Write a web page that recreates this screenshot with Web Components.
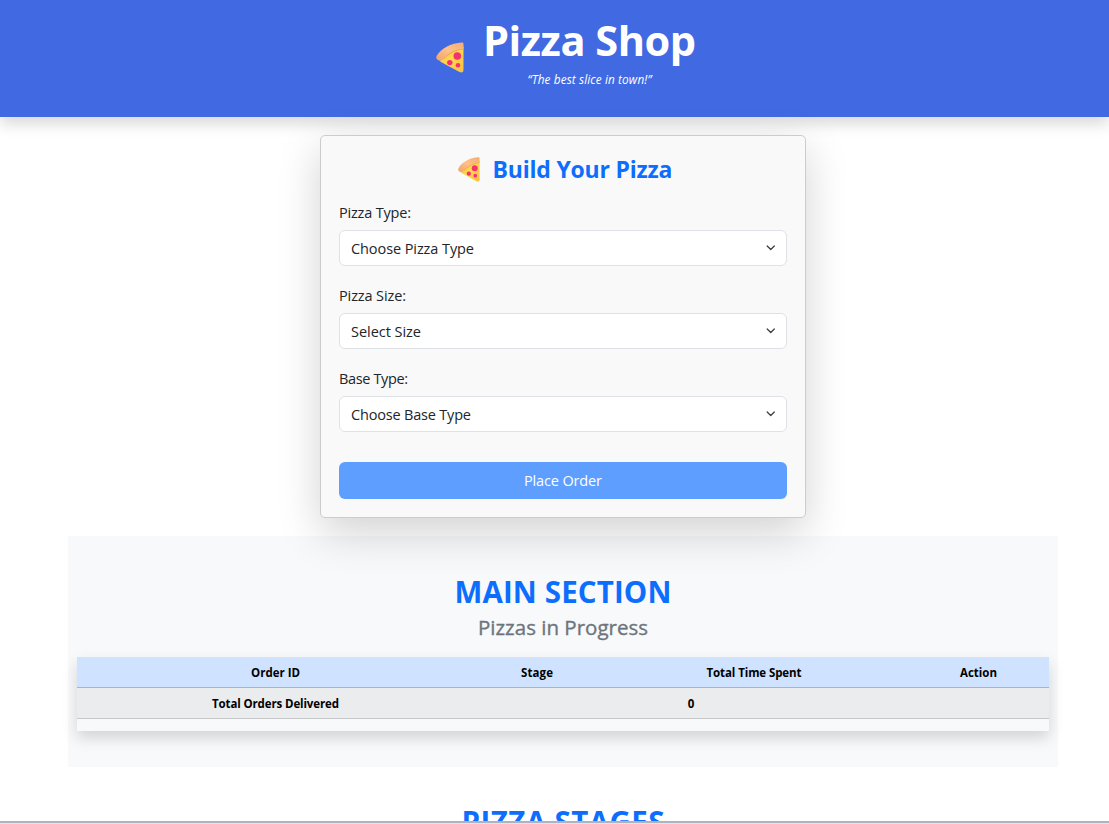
<!DOCTYPE html>
<html lang="en">
<head>
<meta charset="utf-8">
<title>Pizza Shop</title>
<style>
html,body{margin:0;height:100%;overflow:hidden;background:#fff;color:#212529;font-family:"Open Sans","Noto Sans",sans-serif}
</style>
</head>
<body>
<pizza-app></pizza-app>
<script>
const define = (name, html, init) => {
  const t = document.createElement('template');
  t.innerHTML = html;
  customElements.define(name, class extends HTMLElement {
    constructor() {
      super();
      this.attachShadow({ mode: 'open' }).append(t.content.cloneNode(true));
    }
    connectedCallback() { if (init) init(this, this.shadowRoot); }
  });
};

/* Text run whose tracking is tuned so it occupies the width given in "w". */
define('fit-text', `<style>:host{display:inline-block;white-space:nowrap}</style><slot></slot>`, el => {
  const w = +el.getAttribute('w'), n = el.textContent.length;
  const natural = el.getBoundingClientRect().width;
  if (n > 1 && natural) {
    const s = (w - natural) / (n - 1);
    el.style.letterSpacing = s + 'px';
    el.style.marginRight = -s + 'px';
  }
});

define('pizza-slice', `<style>:host{display:block}svg{display:block;width:100%;height:100%}</style>
<svg viewBox="0 0 28 31" preserveAspectRatio="none">
  <defs>
    <linearGradient id="c" x1="0" y1="1" x2="1" y2="0"><stop offset="0" stop-color="#eda366"/><stop offset=".5" stop-color="#ffc08a"/><stop offset="1" stop-color="#f3ae72"/></linearGradient>
    <linearGradient id="h" x1="0" y1="0" x2="1" y2="1"><stop offset="0" stop-color="#f4b952"/><stop offset=".5" stop-color="#ffd84f"/><stop offset="1" stop-color="#f5bd42"/></linearGradient>
  </defs>
  <path d="M6 15.500C11 9.500 18 5.500 27.500 4.500V28C27.500 30.500 25.500 31 23.500 30L4 19.500Z" fill="url(#h)"/>
  <path d="M26 .4C27 .3 27.500 .8 27.500 2V6.500C19 7.500 12.500 11 7.500 16.500C6 18.500 4.500 19.300 3 18.600C.6 17.700-.2 16 .6 14C4.500 6.500 15 1 26 .4Z" fill="url(#c)"/>
  <path d="M7.500 17C12.500 11.300 19 8 27.500 7" fill="none" stroke="#e8a04b" stroke-width=".9"/>
  <circle cx="21.300" cy="14" r="3.800" fill="#f5316f"/><circle cx="13.800" cy="20.600" r="2.700" fill="#f5316f"/><circle cx="22" cy="23.200" r="2.300" fill="#f5316f"/>
</svg>`);

define('shop-header', `<style>
:host{display:flex;justify-content:center;gap:20px;height:117px;box-sizing:border-box;padding:17px 0 0 22px;background:#4169e1;color:#fff;position:relative;box-shadow:0 7px 14px rgba(0,0,0,.15)}
pizza-slice{width:28px;height:31px;margin-top:25px}
.t{display:flex;flex-direction:column;align-items:center;width:211px}
h1{margin:0;font-size:41.500px;line-height:46px;font-weight:700}
p{margin:8px 0 0;font-size:11.800px;line-height:16px;font-style:italic}
</style><pizza-slice></pizza-slice><div class="t"><h1><fit-text w="213">Pizza Shop</fit-text></h1><p><fit-text w="124">“The best slice in town!”</fit-text></p></div>`);

define('form-field', `<style>
:host{display:block;height:83px;font-size:14.500px}
.l{display:block;height:29px;line-height:24px}
.s{display:flex;align-items:center;justify-content:space-between;box-sizing:border-box;height:36px;padding:0 11px 0 11px;border:1px solid #dee2e6;border-radius:6px;background:#fff;line-height:34px}
.v{padding-top:2px}
svg{width:9.500px;height:9.500px;margin-top:-1px}
</style><span class="l"><slot name="label"></slot></span>
<div class="s" role="combobox"><span class="v"><slot></slot></span><svg viewBox="0 0 16 16"><path fill="none" stroke="#343a40" stroke-linecap="round" stroke-linejoin="round" stroke-width="2" d="m2 5 6 6 6-6"/></svg></div>`);

define('order-card', `<style>
:host{display:block;position:relative;box-sizing:border-box;width:486px;height:383px;margin:18px 0 0 320px;padding:18px;border:1px solid #ccc;border-radius:5px;background:#f9f9f9;box-shadow:0 14.400px 43px rgba(0,0,0,.175)}
h2{display:flex;justify-content:center;gap:13px;margin:0 0 17px;padding-left:4px;height:30px;line-height:30px;font-size:23px;font-weight:700;color:#0d6efd}
pizza-slice{width:22px;height:25px;margin-top:3px}
button{display:block;width:100%;height:37px;margin:12px 0 0;padding:0;border:0;border-radius:6px;background:#5e9efe;color:#fff;font:14.500px/37px "Open Sans","Noto Sans",sans-serif}
</style>
<h2><pizza-slice></pizza-slice><fit-text w="180">Build Your Pizza</fit-text></h2>
<form-field><fit-text slot="label" w="72">Pizza Type:</fit-text><fit-text w="123">Choose Pizza Type</fit-text></form-field>
<form-field><fit-text slot="label" w="67">Pizza Size:</fit-text><fit-text w="70">Select Size</fit-text></form-field>
<form-field><fit-text slot="label" w="69">Base Type:</fit-text><fit-text w="120">Choose Base Type</fit-text></form-field>
<button><fit-text w="78">Place Order</fit-text></button>`);

define('progress-table', `<style>
:host{display:block;height:74px;background:#f8f9fa;box-shadow:0 7px 14px rgba(0,0,0,.15);color:#000;font-size:11.500px;font-weight:700}
.r{display:grid;grid-template-columns:397px 126px 308px 141px;height:30px;line-height:31px;text-align:center;border-bottom:1px solid #a6b5cc;background:#cfe2ff}
.r.f{background:#ebecee;border-color:#c6c7c8}
.two{grid-column:span 2}
</style>
<div class="r"><span><fit-text w="49">Order ID</fit-text></span><span><fit-text w="32">Stage</fit-text></span><span><fit-text w="95">Total Time Spent</fit-text></span><span><fit-text w="37">Action</fit-text></span></div>
<div class="r f"><span><fit-text w="127">Total Orders Delivered</fit-text></span><span class="two">0</span><span></span></div>`);

define('main-section', `<style>
:host{display:block;box-sizing:border-box;width:990px;height:231px;margin:18px 0 0 68px;padding:36px 9px 0;background:#f8f9fa;text-align:center}
h2{margin:0;height:38px;line-height:39px;font-size:29.500px;font-weight:700;color:#0d6efd}
h4{margin:3px 0 16px;height:28px;line-height:28px;font-size:20.500px;font-weight:500;color:#6c757d;-webkit-text-stroke:.35px #6c757d}
</style>
<h2><fit-text w="217">MAIN SECTION</fit-text></h2><h4><fit-text w="170">Pizzas in Progress</fit-text></h4><progress-table></progress-table>`);

define('stages-section', `<style>
:host{display:block;box-sizing:border-box;height:54px;padding:36px 0 0 17px;overflow:hidden;text-align:center}
h2{margin:0;line-height:38px;font-size:29.500px;font-weight:700;color:#0d6efd}
</style><h2><fit-text w="203">PIZZA STAGES</fit-text></h2>`);

define('window-edge', `<style>:host{display:block;box-sizing:border-box;height:3px;background:#e2e5ee;border-top:2px solid #b0b3be}</style>`);

define('pizza-app', `<style>:host{display:block}</style>
<shop-header></shop-header><order-card></order-card><main-section></main-section><stages-section></stages-section><window-edge></window-edge>`);
</script>
</body>
</html>
